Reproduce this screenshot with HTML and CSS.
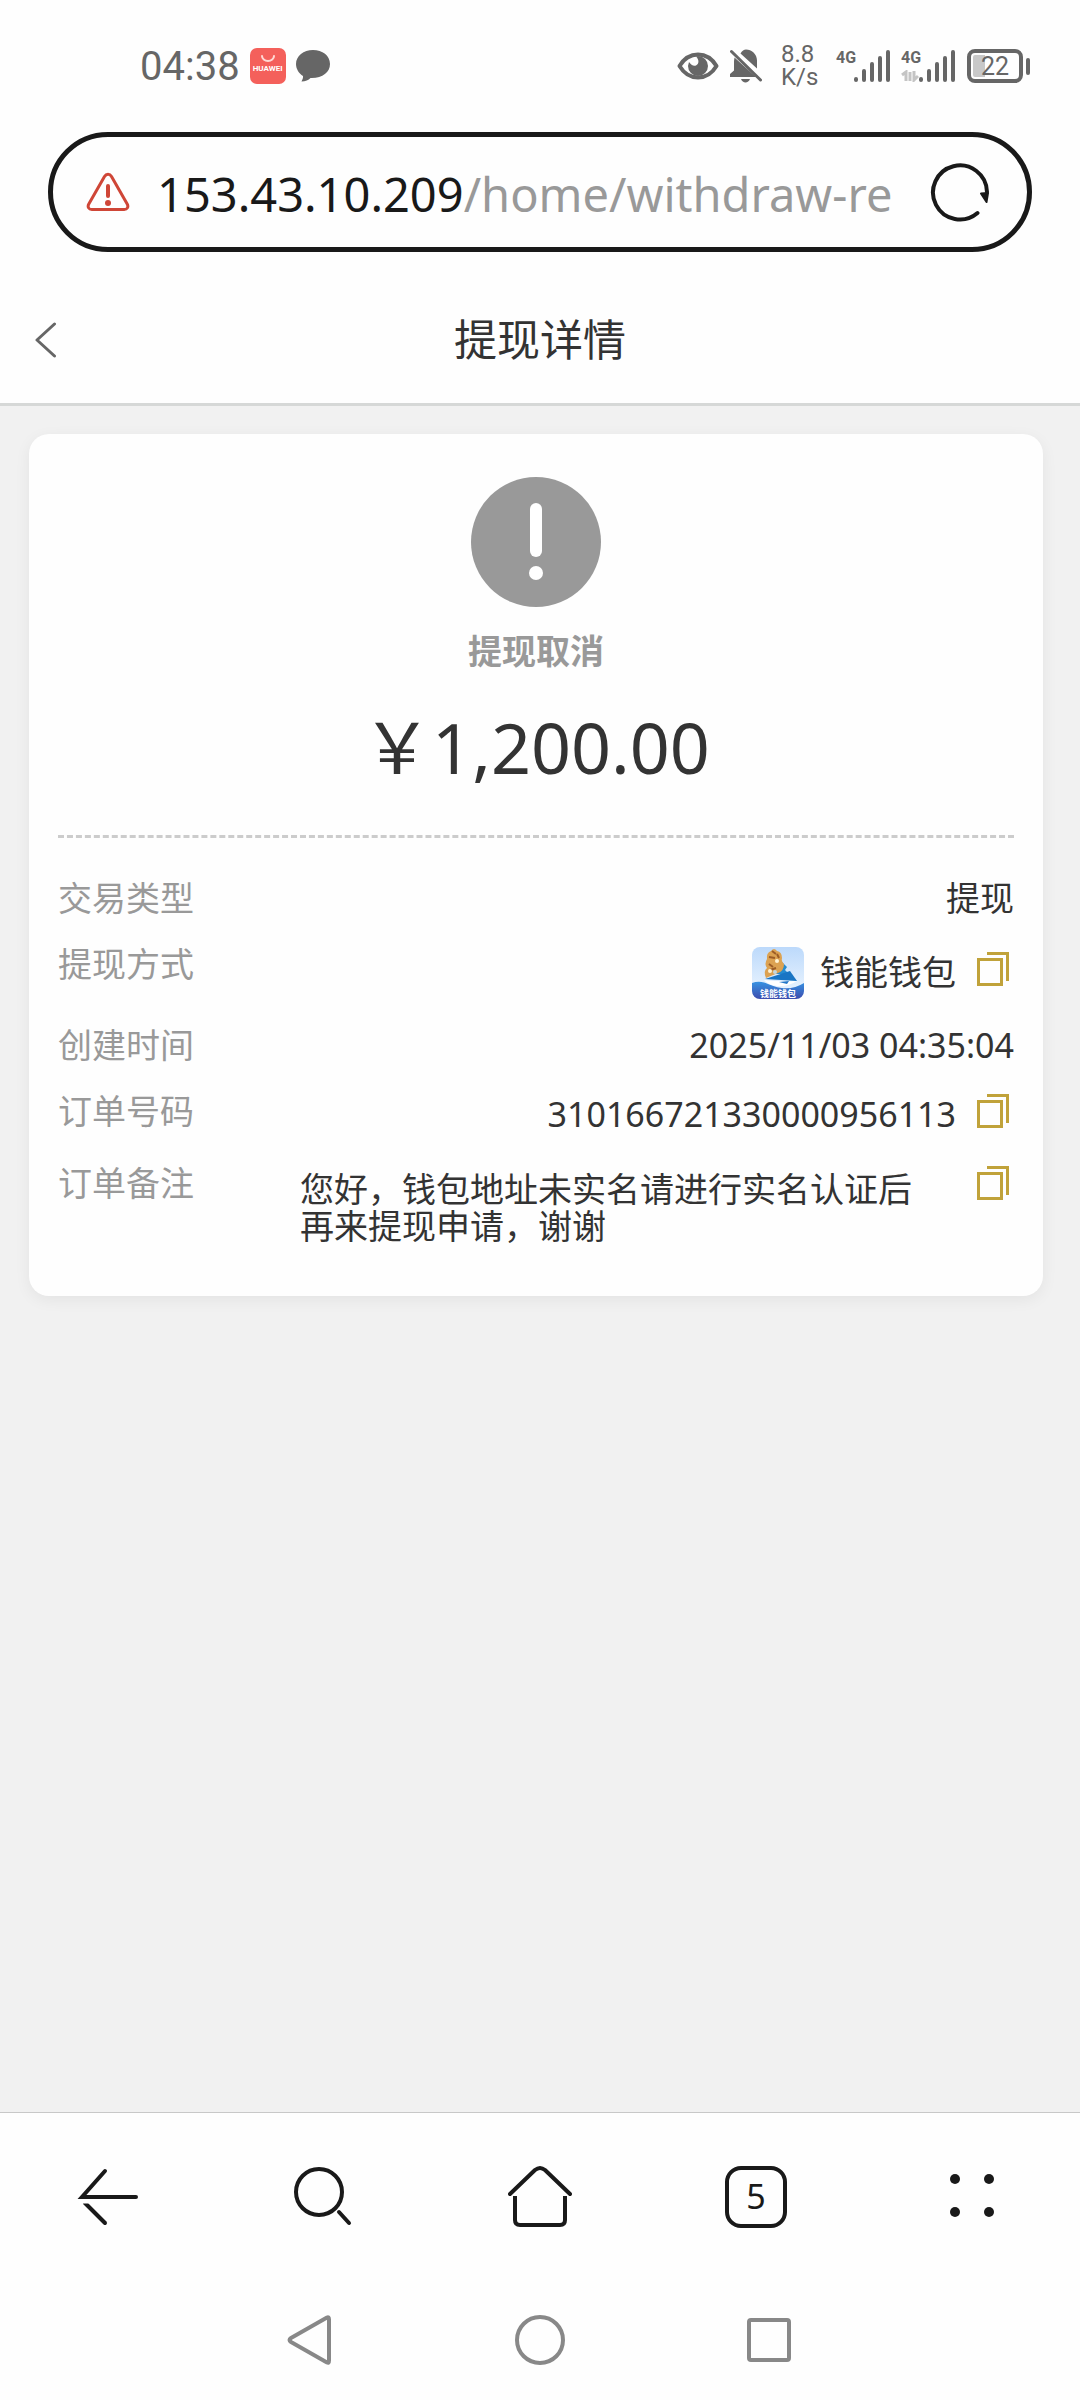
FILE: index.html
```html
<!DOCTYPE html>
<html lang="zh-CN">
<head>
<meta charset="utf-8">
<meta name="viewport" content="width=device-width">
<title>提现详情</title>
<link rel="stylesheet" href="styles.css">
</head>
<body>
<div class="status-bar">
  <div class="status-left">
    <time class="clock">04:38</time>
    <span class="app-badge">
      <svg width="16" height="8" viewBox="0 0 16 8" fill="none" stroke="#ffd9d4" stroke-width="2" stroke-linecap="round"><path d="M2 1a6 5 0 0 0 12 0"/></svg>
      <span>HUAWEI</span>
    </span>
    <svg width="34" height="32" viewBox="0 0 34 32" fill="#666"><path d="M17 0C7.600 0 0 6 0 14c0 5 3 9.500 7 12 .2 2-.5 3.500-1.500 5.500 4 0 7-1.500 9-3.500C26 28.500 34 22.500 34 14S26.400 0 17 0z"/></svg>
  </div>
  <div class="status-right">
    <svg class="eye" width="42" height="28" viewBox="0 0 42 28"><path d="M2.500 14C7 6.500 13 2.500 21 2.500S35 6.500 39.500 14C35 21.500 29 25.500 21 25.500S7 21.500 2.500 14z" fill="none" stroke="#666" stroke-width="4" stroke-linejoin="round"/><path d="M21 4a10 10 0 1 1-10 10l1-4c2 3 4.500 4.500 7 3.500 3-1.500 3.500-5.500 0-9z" fill="#666"/></svg>
    <svg class="bell" width="32" height="34" viewBox="0 0 32 34" fill="#666"><path d="M4.500 8.500 26 28H0v-3l4-3.500V12zM10.500 4.500C12 2 14 .5 16 .5c5.500 0 11 4.500 11 11v8zM11 30h9c-1.500 4.500-7.500 4.500-9 0z"/><path d="M1.500 2.500 30.500 31" stroke="#666" stroke-width="3" stroke-linecap="round"/></svg>
    <span class="speed"><span>8.8</span><span>K/s</span></span>
    <span class="signal">
      <span class="net">4G</span>
      <svg width="36" height="34" viewBox="0 0 36 34" stroke="#666" stroke-width="4" stroke-linecap="round"><path d="M2 31v-1M10 31V22M18 31V15M26 31V9M34 31V3"/></svg>
    </span>
    <span class="signal">
      <span class="net">4G<svg width="18" height="12" viewBox="0 0 18 12" fill="none" stroke="#c4c4c4" stroke-width="3"><path d="M1 5 5 2v9M9 11V2M13 1v9l4-4"/></svg></span>
      <svg width="36" height="34" viewBox="0 0 36 34" stroke="#666" stroke-width="4" stroke-linecap="round"><path d="M2 31v-1M10 31V22M18 31V15M26 31V9M34 31V3"/></svg>
    </span>
    <span class="battery"><span class="battery-body">22</span><span class="battery-tip"></span></span>
  </div>
</div>

<div class="address-bar">
  <svg width="44" height="40" viewBox="0 0 44 40" fill="none" stroke="#cf4637" stroke-width="3" stroke-linejoin="round"><path d="M18.500 4.500 2.800 32c-1.600 3 0 5.500 3 5.500h32.400c3 0 4.600-2.500 3-5.500L25.500 4.500c-1.800-3-5.200-3-7 0z"/><path d="m22 14 0 10" stroke-width="4" stroke-linecap="round"/><circle cx="22" cy="31" r="3" fill="#cf4637" stroke="none"/></svg>
  <button class="url" type="button"><span class="url-host">153.43.10.209</span>/home/withdraw-re</button>
  <button class="icon-button" type="button" aria-label="刷新">
    <svg width="60" height="60" viewBox="0 0 60 60" fill="none" stroke="#191919" stroke-width="4" stroke-linecap="round"><path d="M47.500 51A27 27 0 1 1 57 30"/><path d="m51 31.500 7-.5-1.500 9z" fill="#191919" stroke-width="2" stroke-linejoin="round"/></svg>
  </button>
</div>

<header class="page-header">
  <button class="icon-button" type="button" aria-label="返回">
    <svg width="22" height="36" viewBox="0 0 22 36" fill="none" stroke="#666" stroke-width="3" stroke-linecap="round" stroke-linejoin="round"><path d="M19.500 2 2 18l17.500 16"/></svg>
  </button>
  <h1 class="page-title">提现详情</h1>
</header>

<main class="content">
  <section class="card">
    <div class="summary">
      <svg width="130" height="130" viewBox="0 0 130 130"><circle cx="65" cy="65" r="65" fill="#999"/><rect x="59" y="26" width="12" height="54" rx="6" fill="#fff"/><circle cx="65" cy="96" r="7" fill="#fff"/></svg>
      <p class="state">提现取消</p>
      <p class="amount">￥1,200.00</p>
    </div>
    <dl class="details">
      <div class="row"><dt>交易类型</dt><dd>提现</dd></div>
      <div class="row">
        <dt>提现方式</dt>
        <dd class="wallet">
          <svg class="wallet-logo" width="52" height="52" viewBox="0 0 52 52">
            <defs>
              <linearGradient id="sky" x1="0" y1="0" x2="0" y2="1"><stop offset="0" stop-color="#bcd9fb"/><stop offset="1" stop-color="#f0f8ff"/></linearGradient>
              <linearGradient id="sea" x1="0" y1="0" x2="0" y2="1"><stop offset="0" stop-color="#3692e2"/><stop offset="1" stop-color="#3d4cae"/></linearGradient>
            </defs>
            <rect width="52" height="52" rx="8" fill="url(#sky)"/>
            <path d="m29 14 6 6-2 3 4 4H21z" fill="#258bd0"/>
            <path d="M19 4q3-4 6 0 5 1 5 7-1 3 2 6 0 7-6 9l-12 5q-3-7 1-10-3-4 0-9-1-6 4-8z" fill="#dca252"/>
            <path d="m20 4 4 3m-7 3 6 1m-6 6 4 3m4-13 2 4m-9 12 6-2" stroke="#9c5c26" stroke-width="2"/>
            <circle cx="25" cy="14" r="2" fill="#fff3d4"/><circle cx="18" cy="24" r="2" fill="#fff3d4"/><circle cx="23" cy="25" r="2" fill="#c4d6dc"/>
            <path d="m13 32 25-8 7 10z" fill="#1975c4"/>
            <path d="M0 36q8-3 16 1 20 9 36-1v8a8 8 0 0 1-8 8H8a8 8 0 0 1-8-8z" fill="url(#sea)"/>
            <path d="M12 33q15 2 33 1-9 6-20 5-9-1-13-6z" fill="#fff"/><path d="m27 35 10-1-2 3z" fill="#2377c8"/>
            <text x="26" y="50" text-anchor="middle" class="logo-text">钱能钱包</text>
          </svg>
          <span>钱能钱包</span>
          <button class="icon-button copy" type="button" aria-label="复制钱包"><svg width="32" height="34" viewBox="0 0 32 34" fill="none" stroke="#c0a23a" stroke-width="3"><path d="M1.500 7.500h23v25h-23zM10 1.500h20.500V29"/></svg></button>
        </dd>
      </div>
      <div class="row"><dt>创建时间</dt><dd>2025/11/03 04:35:04</dd></div>
      <div class="row">
        <dt>订单号码</dt>
        <dd class="order">
          <span>310166721330000956113</span>
          <button class="icon-button copy" type="button" aria-label="复制订单号码"><svg width="32" height="34" viewBox="0 0 32 34" fill="none" stroke="#c0a23a" stroke-width="3"><path d="M1.500 7.500h23v25h-23zM10 1.500h20.500V29"/></svg></button>
        </dd>
      </div>
      <div class="row">
        <dt>订单备注</dt>
        <dd class="note">
          <span>您好，钱包地址未实名请进行实名认证后再来提现申请，谢谢</span>
          <button class="icon-button copy" type="button" aria-label="复制订单备注"><svg width="32" height="34" viewBox="0 0 32 34" fill="none" stroke="#c0a23a" stroke-width="3"><path d="M1.500 7.500h23v25h-23zM10 1.500h20.500V29"/></svg></button>
        </dd>
      </div>
    </dl>
  </section>
</main>

<nav class="toolbar" aria-label="浏览器">
  <button class="icon-button" type="button" aria-label="后退"><svg width="64" height="64" viewBox="0 0 64 64" fill="none" stroke="#191919" stroke-width="4" stroke-linecap="round"><path d="M60 32H6L29 6"/><path d="m9 38 20 20"/><path d="M4 37h8" stroke="#fff" stroke-width="3"/></svg></button>
  <button class="icon-button" type="button" aria-label="搜索"><svg width="64" height="64" viewBox="0 0 64 64" fill="none" stroke="#191919" stroke-width="4"><circle cx="27" cy="27" r="23"/><path d="m47 47 10 11" stroke-linecap="round"/></svg></button>
  <button class="icon-button" type="button" aria-label="主页"><svg width="64" height="64" viewBox="0 0 64 64" fill="none" stroke="#191919" stroke-width="4" stroke-linecap="round" stroke-linejoin="round"><path d="M2 29 27 5q5-4 10 0l25 24"/><path d="M7 31v24q0 5 5 5h40q5 0 5-5V31" stroke-linecap="butt"/></svg></button>
  <button class="icon-button" type="button" aria-label="标签页"><span class="tab-count">5</span></button>
  <button class="icon-button" type="button" aria-label="菜单"><svg width="64" height="64" viewBox="0 0 64 64" fill="#191919"><circle cx="15" cy="14" r="5"/><circle cx="49" cy="14" r="5"/><circle cx="15" cy="47" r="5"/><circle cx="49" cy="47" r="5"/></svg></button>
</nav>

<nav class="system-nav" aria-label="系统">
  <button class="icon-button" type="button" aria-label="系统返回"><svg width="50" height="50" viewBox="0 0 50 50" fill="none" stroke="#888" stroke-width="4" stroke-linejoin="round"><path d="M42 2.500 6 23q-3 2 0 4l36 20.500q2 1 2-2v-41q0-3-2-2z"/></svg></button>
  <button class="icon-button" type="button" aria-label="桌面"><svg width="50" height="50" viewBox="0 0 50 50" fill="none" stroke="#888" stroke-width="4"><circle cx="25" cy="25" r="23"/></svg></button>
  <button class="icon-button" type="button" aria-label="最近任务"><svg width="50" height="50" viewBox="0 0 50 50" fill="none" stroke="#888" stroke-width="4"><rect x="4" y="5" width="40" height="40" rx="2"/></svg></button>
</nav>
</body>
</html>
```
FILE: styles.css
```css
* { box-sizing: border-box; }

body {
  margin: 0;
  min-height: 100vh;
  display: flex;
  flex-direction: column;
  background: #fefefe;
  color: #333;
  font-family: "Noto Sans", "Noto Sans CJK SC", sans-serif;
  font-size: 34px;
  line-height: 40px;
}

svg { display: block; flex: none; }
p, dl, dd, h1 { margin: 0; }

.icon-button {
  display: flex;
  align-items: center;
  justify-content: center;
  flex: none;
  padding: 0;
  border: 0;
  background: none;
  font: inherit;
  color: #191919;
}

/* Status bar */
.status-bar {
  display: flex;
  justify-content: space-between;
  align-items: center;
  height: 132px;
  padding: 0 50px 0 140px;
  color: #666;
  font-family: Roboto, sans-serif;
}
.status-left, .status-right { display: flex; align-items: center; }
.status-left { gap: 10px; }
.clock { padding-top: 2px; font-size: 40px; line-height: 44px; }
.app-badge {
  display: flex;
  flex-direction: column;
  align-items: center;
  width: 36px;
  height: 36px;
  padding-top: 7px;
  border-radius: 7px;
  background: #f4605b;
  color: #fff;
  font-size: 8px;
  font-weight: 700;
  line-height: 12px;
}
.bell { margin-left: 11px; }
.speed {
  display: flex;
  flex-direction: column;
  width: 37px;
  margin-left: 19px;
  font-size: 24px;
  line-height: 23px;
}
.signal { display: flex; align-items: center; margin-left: 18px; }
.signal + .signal { margin-left: 11px; }
.net {
  display: flex;
  flex-direction: column;
  gap: 3px;
  width: 18px;
  height: 34px;
  font-size: 16px;
  font-weight: 700;
  line-height: 18px;
}
.battery { display: flex; align-items: center; gap: 3px; margin-left: 12px; }
.battery-body {
  width: 56px;
  height: 34px;
  padding: 2px;
  border: 4px solid #666;
  border-radius: 8px;
  background: linear-gradient(to right, #c8c8c8 14px, #fefefe 14px);
  background-clip: content-box;
  font-size: 25px;
  line-height: 23px;
  text-align: center;
}
.battery-tip { width: 4px; height: 17px; border-radius: 2px; background: #666; }

/* Address bar */
.address-bar {
  display: flex;
  align-items: center;
  height: 120px;
  margin: 0 48px;
  padding: 0 37px 0 33px;
  border: 5px solid #191919;
  border-radius: 60px;
}
.url {
  flex: 1;
  min-width: 0;
  margin-left: 27px;
  padding: 4px 0 0;
  border: 0;
  background: none;
  overflow: hidden;
  color: #999;
  font: inherit;
  font-size: 47px;
  line-height: 68px;
  text-align: left;
  white-space: nowrap;
}
.url-host { color: #191919; }

/* Page header */
.page-header {
  display: grid;
  grid-template-columns: 1fr auto 1fr;
  align-items: center;
  justify-items: start;
  height: 154px;
  padding: 25px 35px 0;
  border-bottom: 3px solid #d6d8d7;
}
.page-title { font-size: 43px; font-weight: 400; line-height: 60px; }

/* Withdrawal card */
.content { flex: 1; padding: 28px 37px 28px 29px; background: #f1f1f1; }
.card {
  padding: 43px 29px 51px;
  border-radius: 20px;
  background: #fefefe;
  box-shadow: 0 4px 16px rgba(0, 0, 0, 0.06);
}
.summary {
  display: flex;
  flex-direction: column;
  align-items: center;
  padding-bottom: 38px;
  border-bottom: 3px dashed #ccc;
}
.state { margin-top: 24px; color: #999; font-weight: 700; }
.amount { margin-top: 26px; font-size: 70px; line-height: 100px; }

.details { display: flex; flex-direction: column; gap: 26px; padding-top: 40px; }
.row { display: flex; justify-content: space-between; }
.row dt { color: #999; }
.wallet, .order, .note { display: flex; align-items: flex-start; }
.copy { margin: 3px 5px 0 21px; }
.wallet { padding-top: 3px; line-height: 50px; }
.wallet-logo { margin-right: 16px; }
.logo-text { fill: #fff; font-size: 9px; font-weight: 700; }
.wallet .copy { margin-top: 5px; }
.order { line-height: 46px; }
.note { flex: 1; line-height: 37px; margin-left: 106px; }
.note span { flex: 1; padding-top: 8px; padding-right: 34px; }

/* Browser toolbar */
.toolbar {
  display: grid;
  grid-template-columns: repeat(5, 1fr);
  align-items: center;
  height: 168px;
  border-top: 1px solid #c8c8c8;
}
.tab-count {
  width: 62px;
  height: 62px;
  border: 4px solid #191919;
  border-radius: 16px;
  font-size: 34px;
  line-height: 52px;
}

/* System navigation */
.system-nav {
  display: grid;
  grid-template-columns: repeat(3, 1fr);
  align-items: center;
  height: 120px;
  padding: 0 18%;
}
```
